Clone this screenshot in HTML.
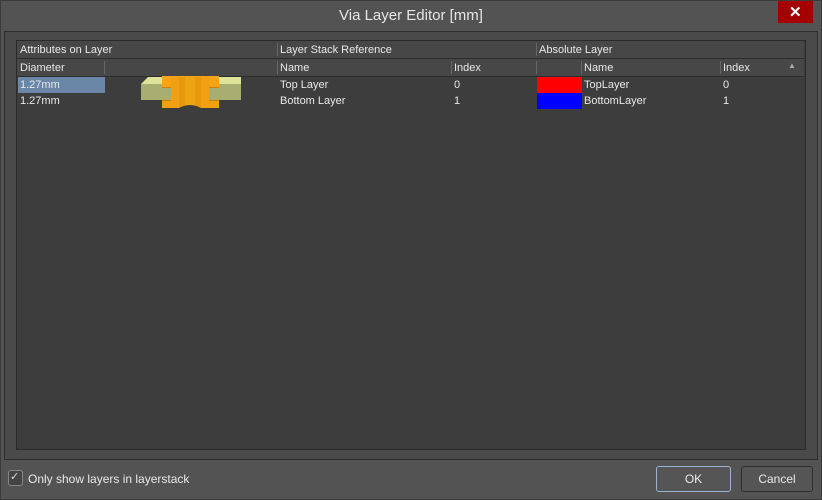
<!DOCTYPE html>
<html><head><style>
body{margin:0;width:822px;height:500px;background:#535353;font-family:"Liberation Sans",sans-serif;font-size:11px;color:#e8e8e8;position:relative;overflow:hidden}
.a{position:absolute}
.t{position:absolute;white-space:nowrap}
</style></head><body>
<div class="a" style="left:0;top:0;width:820px;height:498px;border:1px solid #3a3a3a"></div>
<div class="t" style="left:0;width:822px;top:7px;text-align:center;font-size:15px;color:#e6e6e6">Via Layer Editor [mm]</div>
<div class="a" style="left:778px;top:1px;width:35px;height:22px;background:#a50000"></div>
<div class="t" style="left:789px;top:3px;font-size:15px;font-weight:bold;color:#fff">✕</div>
<div class="a" style="left:4px;top:31px;width:812px;height:427px;border:1px solid #2e2e2e;background:#4a4a4a"></div>
<div class="a" style="left:16px;top:40px;width:788px;height:408px;border:1px solid #2a2a2a;background:#3d3d3d"></div>
<div class="a" style="left:17px;top:41px;width:787px;height:17px;background:#474747;border-bottom:1px solid #2c2c2c"></div>
<div class="a" style="left:17px;top:59px;width:787px;height:17px;background:#474747;border-bottom:1px solid #2c2c2c"></div>
<div class="a" style="left:277px;top:43px;width:1px;height:13px;background:#666"></div>
<div class="a" style="left:536px;top:43px;width:1px;height:13px;background:#666"></div>
<div class="a" style="left:104px;top:61px;width:1px;height:13px;background:#666"></div>
<div class="a" style="left:277px;top:61px;width:1px;height:13px;background:#666"></div>
<div class="a" style="left:451px;top:61px;width:1px;height:13px;background:#666"></div>
<div class="a" style="left:536px;top:61px;width:1px;height:13px;background:#666"></div>
<div class="a" style="left:581px;top:61px;width:1px;height:13px;background:#666"></div>
<div class="a" style="left:720px;top:61px;width:1px;height:13px;background:#666"></div>
<div class="t" style="left:20px;top:44px">Attributes on Layer</div>
<div class="t" style="left:280px;top:44px">Layer Stack Reference</div>
<div class="t" style="left:539px;top:44px">Absolute Layer</div>
<div class="t" style="left:20px;top:62px">Diameter</div>
<div class="t" style="left:280px;top:62px">Name</div>
<div class="t" style="left:454px;top:62px">Index</div>
<div class="t" style="left:584px;top:62px">Name</div>
<div class="t" style="left:723px;top:62px">Index</div>
<div class="t" style="left:788px;top:61px;font-size:8px;color:#aaa">▲</div>
<div class="a" style="left:18px;top:77px;width:87px;height:16px;background:#6a87a8"></div>
<div class="t" style="left:20px;top:79px">1.27mm</div>
<div class="t" style="left:20px;top:95px">1.27mm</div>
<div class="t" style="left:280px;top:79px">Top Layer</div>
<div class="t" style="left:280px;top:95px">Bottom Layer</div>
<div class="t" style="left:454px;top:79px">0</div>
<div class="t" style="left:454px;top:95px">1</div>
<div class="a" style="left:537px;top:77px;width:45px;height:16px;background:#f00"></div>
<div class="a" style="left:537px;top:93px;width:45px;height:16px;background:#00f"></div>
<div class="t" style="left:584px;top:79px">TopLayer</div>
<div class="t" style="left:584px;top:95px">BottomLayer</div>
<div class="t" style="left:723px;top:79px">0</div>
<div class="t" style="left:723px;top:95px">1</div>
<svg class="a" style="left:140px;top:75px" width="104" height="35">
<polygon points="1,9 8,2 101,2 101,9" fill="#dfe39a"/>
<rect x="1" y="9" width="100" height="16" fill="#a8ad72"/>
<rect x="22" y="1" width="57" height="12" fill="#f4a414"/>
<rect x="22" y="25" width="57" height="8" fill="#f0a010"/>
<rect x="31" y="1" width="8" height="32" fill="#f0a012"/>
<rect x="61" y="1" width="8" height="32" fill="#f0a012"/>
<rect x="39" y="2" width="22" height="31" fill="#e8980e"/>
<rect x="45" y="2" width="10" height="31" fill="#eea514"/>
<path d="M39,33 Q50,27 61,33 Z" fill="#3d3d3d"/>
<rect x="22" y="12" width="9" height="1" fill="#c98208"/>
<rect x="22" y="25" width="9" height="1" fill="#c98208"/>
<rect x="69" y="12" width="10" height="1" fill="#c98208"/>
<rect x="69" y="25" width="10" height="1" fill="#c98208"/>
</svg>
<div class="a" style="left:8px;top:470px;width:13px;height:14px;border:1px solid #888;border-radius:3px;background:#444"></div>
<div class="t" style="left:10px;top:470px;font-size:11px;color:#ddd">✓</div>
<div class="t" style="left:28px;top:472px;font-size:12px">Only show layers in layerstack</div>
<div class="a" style="left:656px;top:466px;width:73px;height:24px;border:1px solid #9ab4d0;border-radius:3px;background:#555"></div>
<div class="t" style="left:656px;top:472px;width:75px;text-align:center;font-size:12px">OK</div>
<div class="a" style="left:741px;top:466px;width:70px;height:24px;border:1px solid #2e2e2e;border-radius:3px;background:#555"></div>
<div class="t" style="left:741px;top:472px;width:72px;text-align:center;font-size:12px">Cancel</div>
</body></html>
